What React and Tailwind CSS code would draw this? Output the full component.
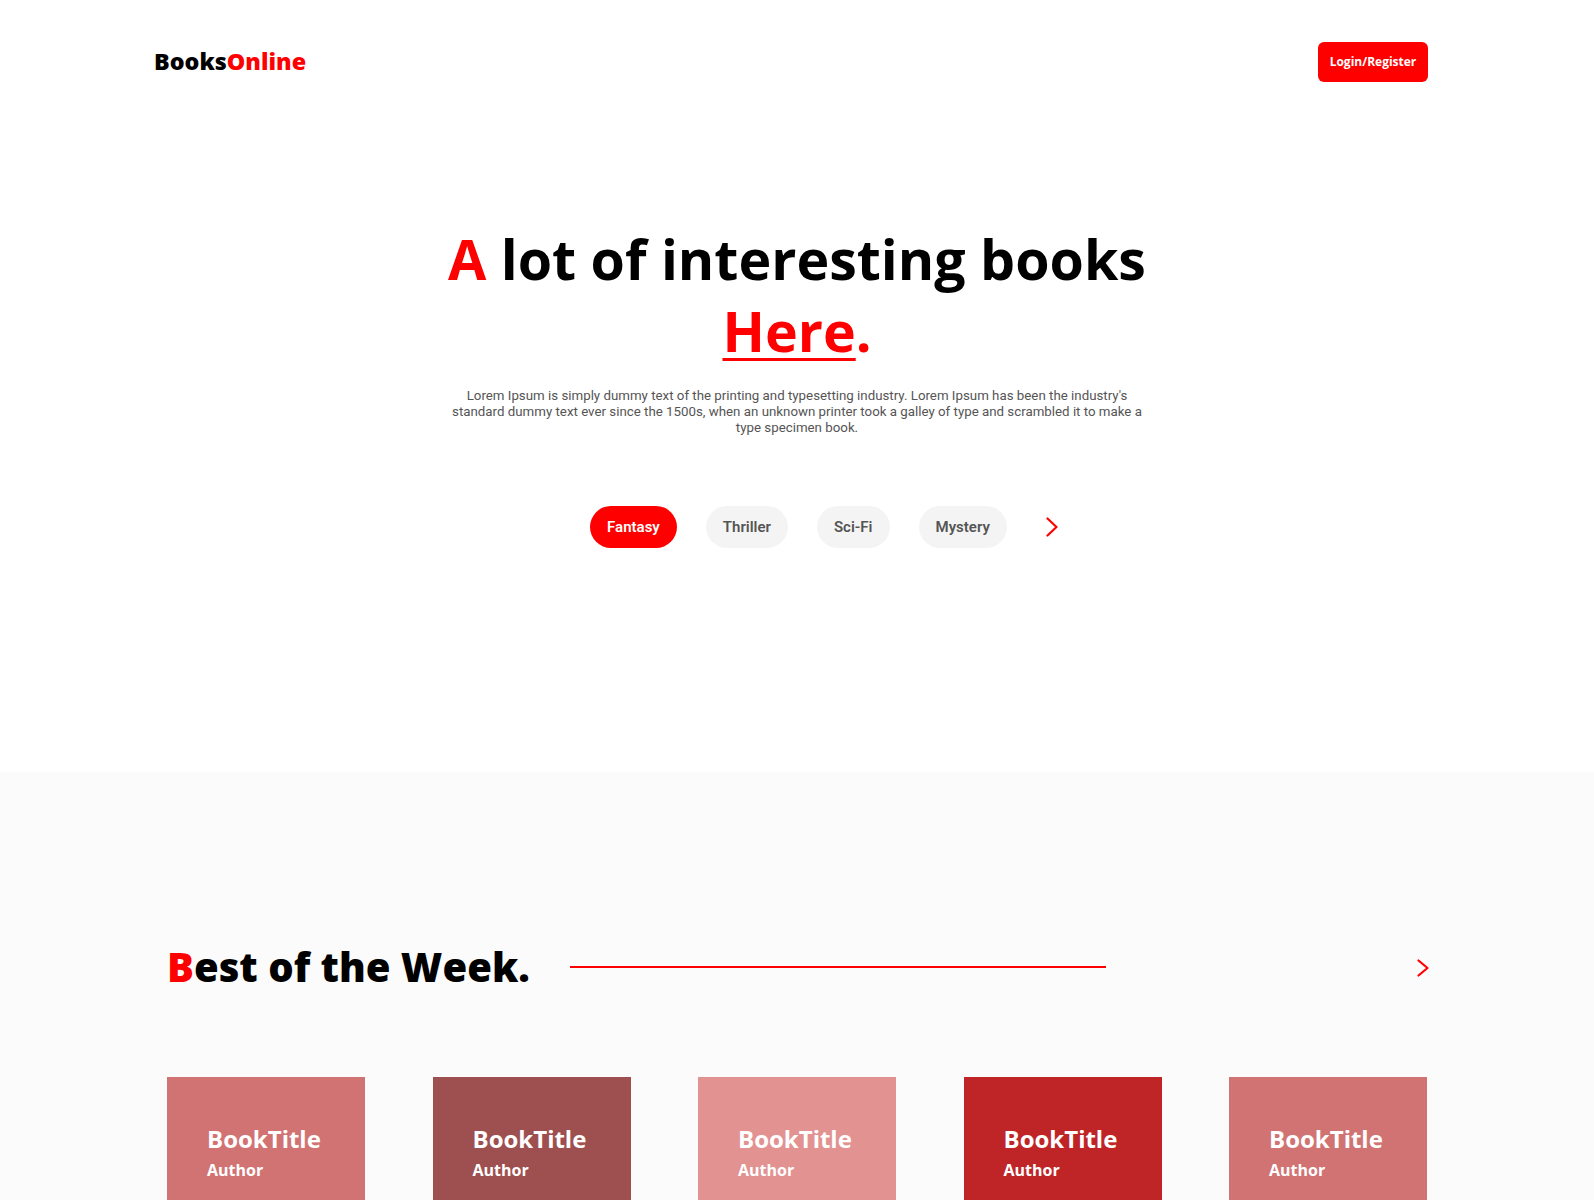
const genres = ["Fantasy", "Thriller", "Sci-Fi", "Mystery"];

const books = [
  { title: "BookTitle", author: "Author", color: "bg-[#d27373]" },
  { title: "BookTitle", author: "Author", color: "bg-[#9e4f4f]" },
  { title: "BookTitle", author: "Author", color: "bg-[#e39292]" },
  { title: "BookTitle", author: "Author", color: "bg-[#bf2526]" },
  { title: "BookTitle", author: "Author", color: "bg-[#d27373]" },
];

// simple red chevron, drawn to fill its box
const Chevron = ({ w, h }) => (
  <svg width={w} height={h} viewBox={`0 0 ${w} ${h}`} fill="none">
    <polyline
      points={`1.5,1.5 ${w - 1.5},${h / 2} 1.5,${h - 1.5}`}
      stroke="#ff0000"
      strokeWidth="2.2"
      strokeLinecap="round"
      strokeLinejoin="round"
    />
  </svg>
);

const App = () => {
  return (
    <div className="min-h-screen bg-white font-['Open_Sans',sans-serif]">
      {/* Hero Section */}
      <section className="bg-white pb-[224px]">
        <header className="flex items-center justify-between pl-[154px] pr-[166px] pt-[42px]">
          <a href="#" className="text-[23.3px] font-extrabold leading-none text-black">
            Books<span className="text-[#ff0000]">Online</span>
          </a>
          <button className="h-[40px] w-[110px] rounded-md bg-[#ff0000] text-[12px] font-bold text-white">
            Login/Register
          </button>
        </header>

        <div className="mt-[141px] flex flex-col items-center text-center">
          <h1 className="text-[55.5px] font-bold leading-[72px] text-black">
            <span className="text-[#ff0000]">A</span> lot of interesting books
            <br />
            <span className="text-[#ff0000]">
              <span className="underline decoration-[3px] underline-offset-[6px]">Here</span>.
            </span>
          </h1>
          <p className="mt-[21px] max-w-[700px] font-['Roboto',sans-serif] text-[13.3px] leading-4 text-[#555555]">
            Lorem Ipsum is simply dummy text of the printing and typesetting industry. Lorem Ipsum has been the
            industry's standard dummy text ever since the 1500s, when an unknown printer took a galley of type and
            scrambled it to make a type specimen book.
          </p>

          <div className="mt-[70px] flex items-center gap-[29px] pl-[54px] font-['Roboto',sans-serif]">
            {genres.map((genre, i) => (
              <button
                key={genre}
                className={
                  i === 0
                    ? "h-[42px] rounded-full bg-[#ff0000] px-[17px] text-[15px] font-semibold text-white"
                    : "h-[42px] rounded-full bg-[#f4f4f4] px-[17px] text-[15px] font-semibold text-[#555555]"
                }
              >
                {genre}
              </button>
            ))}
            <button className="ml-[10px]">
              <Chevron w={12} h={20} />
            </button>
          </div>
        </div>
      </section>

      {/* Best of the Week Section */}
      <section className="bg-[#fbfbfb] pb-20 pt-[171px]">
        <div className="mx-auto w-[1260px]">
          <div className="flex items-center">
            <h2 className="text-[40px] font-extrabold leading-[48px] text-black">
              <span className="text-[#ff0000]">B</span>est of the Week.
            </h2>
            <div className="ml-[40px] h-[2px] w-[536px] bg-[#ff0000]" />
            <button className="ml-auto mr-[-2px] mt-[2px]">
              <Chevron w={12} h={18} />
            </button>
          </div>

          <div className="mt-[86px] flex justify-between">
            {books.map((book, i) => (
              <div key={i} className={`h-[280px] w-[198px] pl-10 pt-[46px] text-white ${book.color}`}>
                <h3 className="text-[24px] font-bold leading-8">{book.title}</h3>
                <p className="mt-[3px] text-[16px] font-bold leading-6">{book.author}</p>
              </div>
            ))}
          </div>
        </div>
      </section>
    </div>
  );
};

export default App;
